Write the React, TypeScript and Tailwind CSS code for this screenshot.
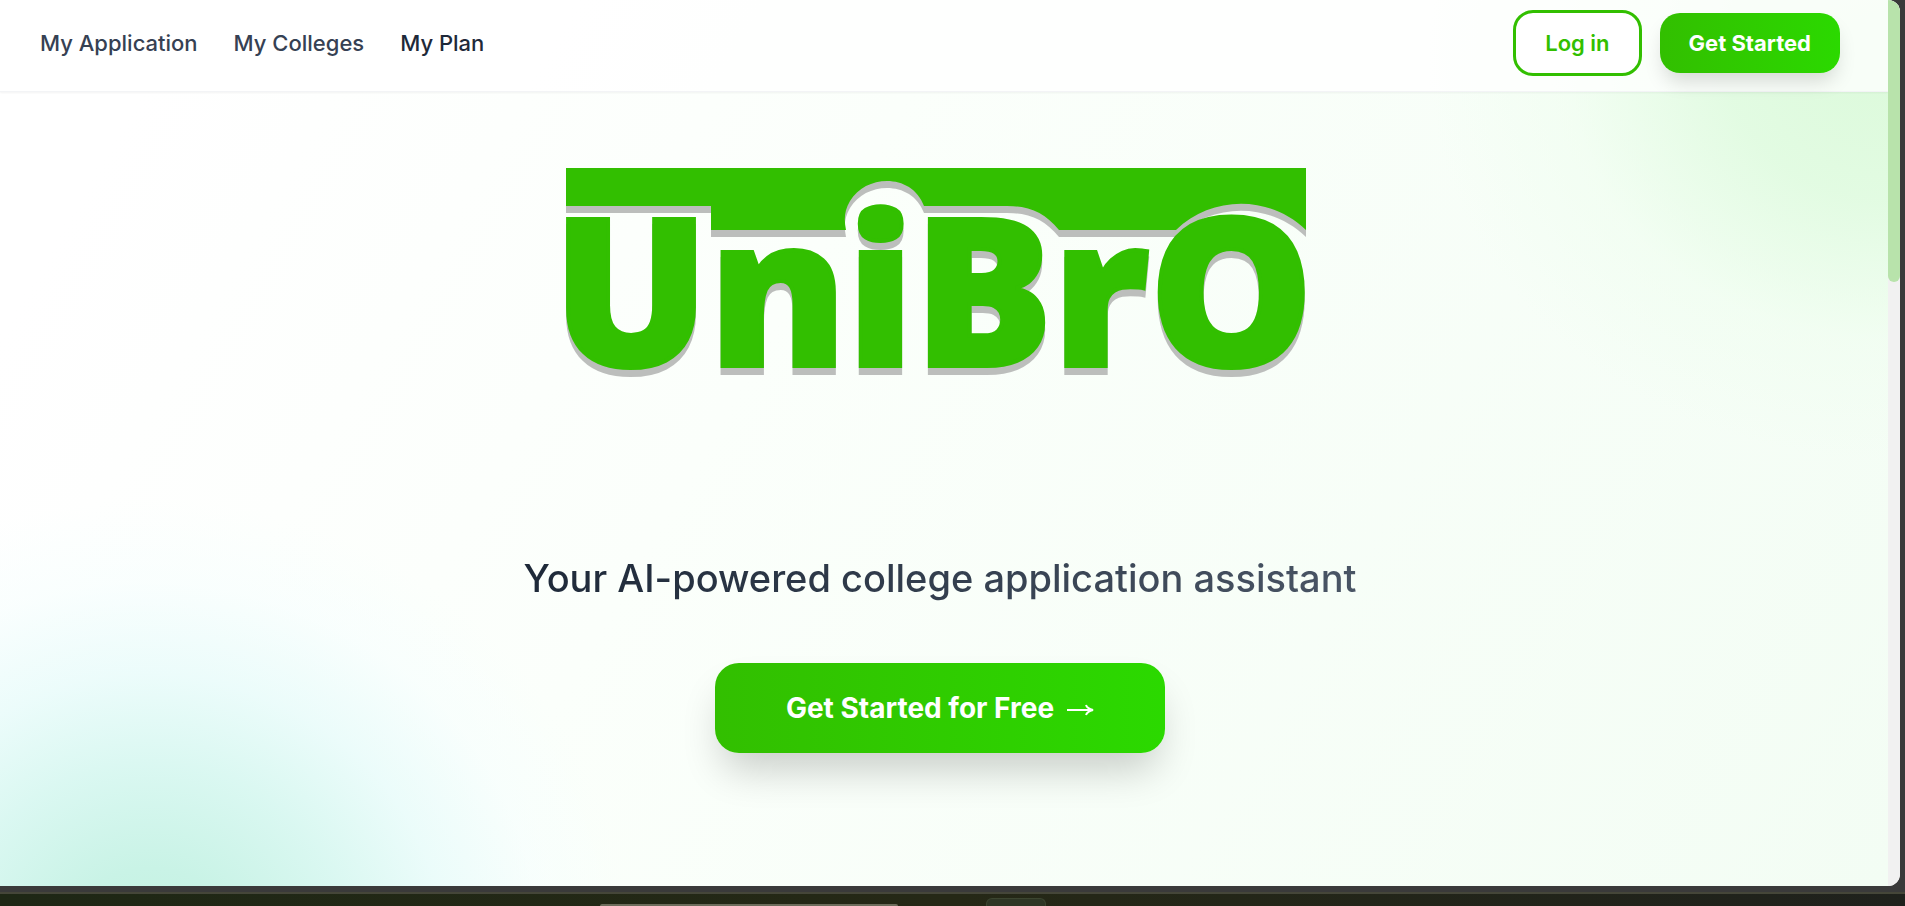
interface NavItem {
  label: string;
  href: string;
  className: string;
}

const NAV_ITEMS: NavItem[] = [
  { label: 'My Application', href: '#application', className: 'text-gray-700' },
  { label: 'My Colleges', href: '#colleges', className: 'text-gray-700' },
  { label: 'My Plan', href: '#plan', className: 'text-gray-800' },
];

const BANNER =
  'M0 0H740V62C704 27 646 27 610 62H493C479 45 464 38 441 38H358C346 5 300 6 284 33C278 43 278 52 280 62H145V38H0Z';

function Logo() {
  return (
    <svg
      viewBox="0 0 748 216"
      role="img"
      aria-label="UniBrO"
      className="w-[748px] max-w-full h-auto overflow-visible drop-shadow-[0_7px_0_#bcbebc]"
      fill="#32bf00"
    >
      <path d={BANNER} />
      <text x={-13} y={198} fontFamily="'Open Sans', sans-serif" fontWeight={800} fontSize={206} stroke="#32bf00" strokeWidth={4}>
        UniBrO
      </text>
    </svg>
  );
}

function Header() {
  return (
    <header className="flex items-center justify-between h-[92px] pb-[5px] pl-10 pr-12 bg-white/80 border-b border-gray-100 shadow-xs">
      <nav className="flex items-center gap-9 text-[22px] font-medium">
        {NAV_ITEMS.map((item) => (
          <a key={item.label} href={item.href} className={item.className}>
            {item.label}
          </a>
        ))}
      </nav>
      <div className="flex items-center gap-[18px] text-[22px]">
        <button className="h-[66px] px-[29px] rounded-[20px] border-3 border-[#32bf00] bg-white text-[#32bf00] font-semibold">
          Log in
        </button>
        <button className="h-[60px] px-[29px] rounded-[20px] bg-linear-to-r from-[#32bf00] to-[#2bd900] text-white font-bold shadow-[0_12px_20px_-4px_rgba(0,0,0,0.15)]">
          Get Started
        </button>
      </div>
    </header>
  );
}

function Hero() {
  return (
    <main className="flex flex-col items-center pt-[76px] pl-6 pr-8">
      <h1>
        <Logo />
      </h1>
      <p className="mt-[170px] text-[38px] leading-[48px] font-medium bg-linear-to-r from-gray-800 to-gray-600 bg-clip-text text-transparent">
        Your AI-powered college application assistant
      </p>
      <button className="flex items-center justify-center gap-3 mt-[61px] h-[90px] px-[71px] rounded-3xl bg-linear-to-r from-[#32bf00] to-[#2bd900] text-white text-[28px] font-bold shadow-[0_24px_40px_-8px_rgba(0,0,0,0.2)]">
        Get Started for Free
        <svg viewBox="0 0 28 16" className="w-7 h-4" fill="none" stroke="currentColor" strokeWidth={2} aria-hidden="true">
          <path d="M1 10H26M20 5C21 8 23 9 27 10C23 11 21 12 20 15" />
        </svg>
      </button>
    </main>
  );
}

function Scrollbar() {
  return (
    <div className="w-3 shrink-0 bg-[#f1f1f1]">
      <div className="h-[282px] rounded-b-md bg-[#b8e3ab]" />
    </div>
  );
}

// Strip of the desktop that shows under the browser window
function Desktop() {
  return (
    <footer className="flex items-end h-3 bg-linear-to-r from-[#1e2715] via-[#252816] to-[#1f211c]">
      <div className="ml-[600px] w-[298px] h-0.5 rounded-t-full bg-[#6d6d5c]" />
      <div className="ml-[88px] w-[60px] h-2 rounded-t-md border border-b-0 border-[#3c4530] bg-[#2e3625]" />
    </footer>
  );
}

export default function App() {
  return (
    <div className="flex flex-col min-h-screen bg-[#3a3a3a] font-['Inter',sans-serif]">
      <div className="flex flex-1 mr-[5px] mb-1.5 overflow-hidden rounded-r-xl bg-white">
        <div className="flex-1 bg-[radial-gradient(480px_460px_at_150px_960px,#c0f1df_0%,#c9f3e6_20%,rgba(214,247,240,0.9)_42%,rgba(230,251,250,0.75)_62%,rgba(245,254,254,0.5)_82%,rgba(252,255,254,0)_100%),radial-gradient(460px_400px_at_100%_60px,#dcfadb_0%,rgba(224,251,224,0.9)_35%,rgba(238,254,238,0.5)_70%,rgba(248,255,248,0)_100%),linear-gradient(120deg,#ffffff_8%,#fbfffb_40%,#f3fdf4_100%)]">
          <Header />
          <Hero />
        </div>
        <Scrollbar />
      </div>
      <div className="h-0.5 bg-[#454639]" />
      <Desktop />
    </div>
  );
}
